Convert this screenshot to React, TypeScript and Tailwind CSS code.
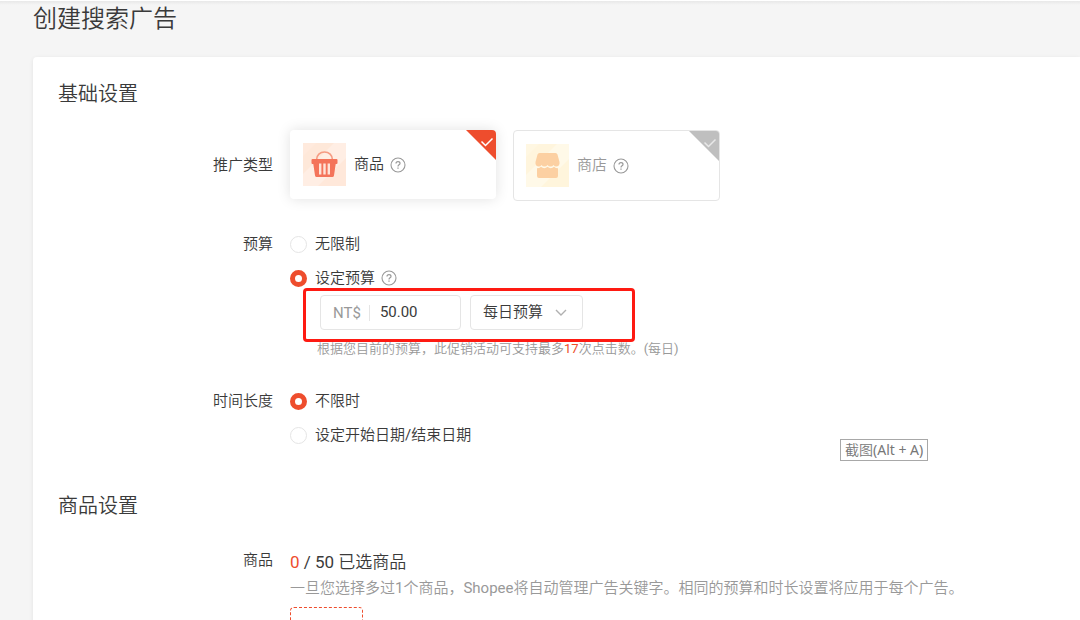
import React, { useState } from 'react';

const HelpIcon: React.FC = () => (
    <svg className="w-4 h-4 shrink-0 text-[#999999]" viewBox="0 0 16 16" fill="none" stroke="currentColor" aria-hidden="true">
        <circle cx="8" cy="8" r="7" strokeWidth="1.1" />
        <path d="M6 6.6C6 5.4 6.8 4.7 8 4.7s2 .7 2 1.7c0 1.4-2 1.5-2 3" strokeWidth="1.2" />
        <path d="M8 10.4v1.3" strokeWidth="1.3" />
    </svg>
);

const BasketIcon: React.FC = () => (
    <svg className="w-[43px] h-[43px] shrink-0" viewBox="0 0 43 43" aria-hidden="true">
        <rect width="43" height="43" fill="#ffeee4" />
        <path d="M0 0h31L0 31z" fill="#fee8d9" />
        <path d="M0 0h13L0 13z" fill="#ffeadd" />
        <path d="M43 15v28H15z" fill="#ffe8da" />
        <path d="M13.5 17c0-5 3.6-8 8-8s8 3 8 8" fill="none" stroke="#f69c83" strokeWidth="1.6" />
        <path d="M9.5 16h24q1 0 1 1v3q0 1-1 1h-.8L31 32.5q-.2 1.5-1.7 1.5H13.7q-1.5 0-1.7-1.5L10.3 21h-.8q-1 0-1-1v-3q0-1 1-1z" fill="#f4745a" />
        <path d="M17.2 20.5v11M21.5 20.5v11M25.8 20.5v11" stroke="#ffe4d8" strokeWidth="2.4" />
    </svg>
);

const ShopIcon: React.FC = () => (
    <svg className="w-[43px] h-[43px] shrink-0" viewBox="0 0 43 43" aria-hidden="true">
        <rect width="43" height="43" fill="#fff9e8" />
        <path d="M0 0h31L0 31z" fill="#fff5dd" />
        <path d="M0 0h13L0 13z" fill="#fff7e2" />
        <path d="M43 15v28H15z" fill="#fff5dc" />
        <path d="M13.5 9h16q1.500 0 2 1.500l2 7.500v2q-.7 2.500-3.200 2.500-1.800 0-2.800-1.500-1 1.500-3 1.500t-3-1.500q-1 1.500-3 1.500t-3-1.500q-1 1.500-2.800 1.500-2.500 0-3.200-2.500v-2l2-7.500q.5-1.500 2-1.500z" fill="#fcd0a2" />
        <path d="M11 24.3q2.300 0 4-1.500 1.500 1.400 3.300 1.400t3.200-1.400q1.500 1.400 3.300 1.400t3.200-1.400q1.700 1.500 4 1.500V32q0 2-2 2H13q-2 0-2-2z" fill="#fcd0a2" />
    </svg>
);

interface TypeCardProps {
    name: string;
    icon: React.ReactNode;
    selected: boolean;
    onSelect: () => void;
}

const TypeCard: React.FC<TypeCardProps> = ({ name, icon, selected, onSelect }) => (
    <button
        type="button"
        role="radio"
        aria-checked={selected}
        onClick={onSelect}
        className={`relative flex items-center rounded overflow-hidden bg-white ${
            selected
                ? 'w-[206px] h-[69px] pl-[13px] shadow-[0_0_14px_rgba(0,0,0,0.12)] text-[#3a3a3a]'
                : 'w-[207px] h-[71px] pl-3 border border-[#e5e5e5] text-[#999999]'
        }`}
    >
        {icon}
        <span className="ml-2 mr-1.5">{name}</span>
        <HelpIcon />
        <svg
            className={`absolute top-0 right-0 w-[30px] h-[30px] ${selected ? 'text-[#ee4d2d]' : 'text-[#bfbfbf]'}`}
            viewBox="0 0 30 30"
            aria-hidden="true"
        >
            <path d="M0 0h30v30z" fill="currentColor" />
            <path d="M15.5 11.5l4 4 7-7" fill="none" stroke={selected ? '#ffffff' : '#e8e8e8'} strokeWidth="1.5" />
        </svg>
    </button>
);

interface RadioOptionProps {
    name: string;
    label: string;
    checked: boolean;
    onChange: () => void;
    help?: boolean;
}

const RadioOption: React.FC<RadioOptionProps> = ({ name, label, checked, onChange, help }) => (
    <label className="flex items-center h-[34px]">
        <input
            type="radio"
            name={name}
            checked={checked}
            onChange={onChange}
            className="appearance-none w-[17px] h-[17px] shrink-0 rounded-full border border-[#e5e5e5] bg-white checked:border-[5px] checked:border-[#ee4d2d]"
        />
        <span className="ml-2 mr-1.5">{label}</span>
        {help && <HelpIcon />}
    </label>
);

interface RowProps {
    label: string;
    labelClass: string;
    className: string;
    children: React.ReactNode;
}

const Row: React.FC<RowProps> = ({ label, labelClass, className, children }) => (
    <div className={`flex items-start gap-[17px] ${className}`}>
        <div className={`w-[215px] shrink-0 flex items-center justify-end ${labelClass}`}>{label}</div>
        <div className="flex-1 min-w-0">{children}</div>
    </div>
);

const App: React.FC = () => {
    const [adType, setAdType] = useState('product');
    const [budgetMode, setBudgetMode] = useState('set');
    const [budget, setBudget] = useState('50.00');
    const [duration, setDuration] = useState('unlimited');

    return (
        <div className="relative h-screen overflow-hidden bg-[#f5f5f5] border-t border-white pl-[33px] font-[Roboto,'Noto_Sans_CJK_SC_DemiLight','Noto_Sans_CJK_SC',sans-serif] text-[15px] text-[#3a3a3a]">
            <div className="absolute top-0 left-0 right-0 h-1 bg-linear-to-b from-[#e8e8e8] to-[#f5f5f5]" />
            <h1 className="h-14 pt-0.5 text-2xl leading-8 font-normal">创建搜索广告</h1>

            <main className="bg-white rounded-tl min-h-full px-[25px] pt-[23px] shadow-[0_1px_4px_rgba(0,0,0,0.08)]">
                {/* Basic settings */}
                <section>
                    <h2 className="text-xl leading-7 font-normal">基础设置</h2>

                    <Row label="推广类型" labelClass="h-[70px]" className="mt-[22px]">
                        <div role="radiogroup" aria-label="推广类型" className="flex items-start gap-[17px]">
                            <TypeCard name="商品" icon={<BasketIcon />} selected={adType === 'product'} onSelect={() => setAdType('product')} />
                            <TypeCard name="商店" icon={<ShopIcon />} selected={adType === 'shop'} onSelect={() => setAdType('shop')} />
                        </div>
                    </Row>

                    <Row label="预算" labelClass="h-[34px]" className="mt-[26px]">
                        <RadioOption name="budget" label="无限制" checked={budgetMode === 'none'} onChange={() => setBudgetMode('none')} />
                        <RadioOption name="budget" label="设定预算" checked={budgetMode === 'set'} onChange={() => setBudgetMode('set')} help />
                        <div className="relative flex gap-[9px] ml-[30px]">
                            <label className="flex items-center w-[141px] h-[35px] border border-[#e5e5e5] rounded px-3">
                                <span className="text-[#999999] pr-2 border-r border-[#e5e5e5] leading-4">NT$</span>
                                <input
                                    type="text"
                                    aria-label="预算金额"
                                    value={budget}
                                    onChange={(e) => setBudget(e.target.value)}
                                    className="flex-1 min-w-0 pl-2.5 outline-none"
                                />
                            </label>
                            <div className="relative w-[113px] h-[35px]">
                                <select aria-label="预算周期" className="appearance-none w-full h-full pl-3 pr-8 border border-[#e5e5e5] rounded bg-white outline-none">
                                    <option>每日预算</option>
                                </select>
                                <svg className="absolute right-4 top-3 w-3 h-3 pointer-events-none" viewBox="0 0 12 12" fill="none" stroke="#b0b0b0" strokeWidth="1.4" aria-hidden="true">
                                    <path d="M1 3l5 5 5-5" />
                                </svg>
                            </div>
                            {/* Highlight frame */}
                            <div className="absolute -left-[17px] -top-[7px] w-[332px] h-[54px] border-[3px] border-[#fe1a12] rounded pointer-events-none" />
                        </div>
                        <p className="ml-[27px] mt-[9px] text-[13px] leading-5 text-[#999999]">
                            根据您目前的预算，此促销活动可支持最多<span className="text-[#ee4d2d]">17</span>次点击数。(每日)
                        </p>
                    </Row>

                    <Row label="时间长度" labelClass="h-[34px]" className="mt-[25px]">
                        <RadioOption name="duration" label="不限时" checked={duration === 'unlimited'} onChange={() => setDuration('unlimited')} />
                        <RadioOption name="duration" label="设定开始日期/结束日期" checked={duration === 'range'} onChange={() => setDuration('range')} />
                    </Row>
                </section>

                {/* Product settings */}
                <section className="mt-10">
                    <h2 className="text-xl leading-7 font-normal">商品设置</h2>

                    <Row label="商品" labelClass="h-6" className="mt-7">
                        <p className="pt-0.5 text-[17px] leading-6">
                            <span className="text-[#ee4d2d]">0</span> / 50 已选商品
                        </p>
                        <p className="mt-0.5 leading-6 text-[#999999]">
                            一旦您选择多过1个商品，Shopee将自动管理广告关键字。相同的预算和时长设置将应用于每个广告。
                        </p>
                        <button type="button" aria-label="添加商品" className="block mt-[7px] w-[73px] h-[73px] border border-dashed border-[#ee4d2d] rounded" />
                    </Row>
                </section>
            </main>

            <div className="absolute left-[840px] top-[438px] border border-[#a8a8a8] bg-white px-1 text-sm leading-5 text-[#777777] whitespace-nowrap font-['Noto_Sans','Noto_Sans_CJK_SC_DemiLight','Noto_Sans_CJK_SC',sans-serif]">
                截图(Alt + A)
            </div>
        </div>
    );
};

export default App;
